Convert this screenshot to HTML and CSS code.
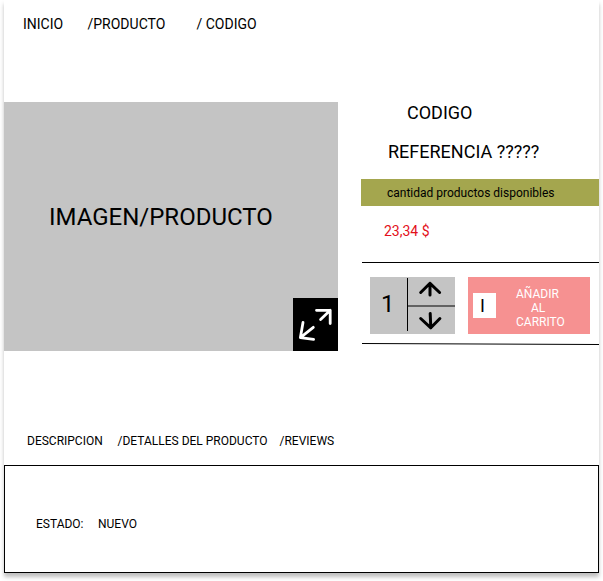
FILE: index.html
```html
<!DOCTYPE html>
<html lang="es">
<head>
<meta charset="utf-8">
<title>Producto</title>
<link rel="stylesheet" href="styles.css">
</head>
<body>
<main class="page">
  <nav class="crumbs"><span class="crumb-home">INICIO</span><span class="crumb-product">/PRODUCTO</span><span>/ CODIGO</span></nav>
  <section class="product">
    <div class="picture">
      <span class="picture-label">IMAGEN/PRODUCTO</span>
      <svg class="expand" viewBox="0 0 45 53" fill="none" stroke="#fff" stroke-width="2.8" stroke-linecap="round" stroke-linejoin="round">
        <path d="M23.5 12.3H37.2V25.5M37.2 12.3L27.6 21.5"/>
        <path d="M10 24.5L7.4 39.6L20.6 41.3M7.4 39.6L20.3 29.3"/>
      </svg>
    </div>
    <div class="info">
      <h1 class="code">CODIGO</h1>
      <h2 class="reference">REFERENCIA ?????</h2>
      <p class="stock">cantidad productos disponibles</p>
      <p class="price">23,34 $</p>
      <div class="buy">
        <div class="quantity">
          <span class="amount">1</span>
          <div class="stepper">
            <svg class="step" viewBox="0 0 47 27" fill="none" stroke="#000" stroke-width="3" stroke-linecap="round" stroke-linejoin="round"><path d="M12.7 14.5L22 5.3L31.6 14.5M22 5.3V17"/></svg>
            <svg class="step" viewBox="0 0 47 27" fill="none" stroke="#000" stroke-width="3" stroke-linecap="round" stroke-linejoin="round"><path d="M12.7 11.5L22.8 20.8L31.9 11.5M22.8 20.8L22.2 6.5"/></svg>
          </div>
        </div>
        <div class="add">
          <span class="add-icon">I</span>
          <span class="add-text"><span>AÑADIR</span><span class="add-middle">AL</span><span>CARRITO</span></span>
        </div>
      </div>
      <svg class="rule" viewBox="0 0 237 3"><path d="M0 1.5L237 2.5" stroke="#000"/></svg>
    </div>
  </section>
  <nav class="tabs"><span class="tab-description">DESCRIPCION</span><span class="tab-details">/DETALLES DEL PRODUCTO</span><span>/REVIEWS</span></nav>
  <section class="details"><span class="state">ESTADO:</span><span>NUEVO</span></section>
</main>
</body>
</html>
```
FILE: styles.css
```css
* { box-sizing: border-box; margin: 0; padding: 0; }

body {
  min-height: 581px;
  background: #fff;
  color: #000;
  font-family: Roboto, "Liberation Sans", sans-serif;
}

.page {
  display: flex;
  flex-direction: column;
  width: 595px;
  height: 573px;
  margin-left: 4px;
  background: #fff;
  box-shadow: 0 4px 4px rgba(0, 0, 0, 0.25);
}

.crumbs {
  display: flex;
  height: 102px;
  padding: 16px 0 0 19px;
  font-size: 14px;
  line-height: 16px;
  white-space: nowrap;
}
.crumb-home { width: 64.5px; }
.crumb-product { width: 109px; }

.product {
  display: flex;
  justify-content: space-between;
  height: 249px;
}

.picture {
  position: relative;
  width: 334px;
  padding: 101px 0 0 45px;
  background: #c4c4c4;
}
.picture-label { font-size: 24px; line-height: 28px; }
.expand {
  position: absolute;
  right: 0;
  bottom: 0;
  width: 45px;
  height: 53px;
  background: #000;
}

.info {
  display: flex;
  flex-direction: column;
  width: 238px;
}
.code, .reference {
  font-size: 18px;
  font-weight: 400;
  line-height: 21px;
}
.code { padding-left: 46px; }
.reference { margin-top: 18px; padding-left: 27px; }
.stock {
  height: 27px;
  margin-top: 17px;
  padding: 7px 0 0 26px;
  background: #a4a64e;
  font-size: 12px;
  line-height: 14px;
}
.price {
  margin: 17px 0 23px;
  padding-left: 23px;
  color: #e3101b;
  font-size: 14px;
  line-height: 16px;
}

.buy {
  display: flex;
  gap: 13px;
  height: 80px;
  margin-left: 1px;
  padding: 14px 0 0 8px;
  border-top: 1px solid #000;
}
.quantity {
  display: flex;
  width: 85px;
  height: 57px;
  background: #c4c4c4;
}
.amount {
  width: 37px;
  padding: 13px 0 0 11px;
  font-size: 24px;
  line-height: 28px;
}
.stepper {
  display: flex;
  flex-direction: column;
  width: 48px;
  height: 53px;
  margin-top: 1px;
  border-left: 1px solid #000;
}
.step { flex: none; width: 47px; height: 27px; }
.step:first-child { height: 29px; border-bottom: 2px solid #626262; }
.rule { flex: none; width: 237px; height: 3px; margin-left: 1px; }

.add {
  display: flex;
  width: 122px;
  height: 57px;
  padding-left: 5px;
  background: #f69191;
}
.add-icon {
  width: 23px;
  height: 25px;
  margin-top: 16px;
  padding: 2px 0 0 7px;
  background: #fff;
  font-size: 18px;
  line-height: 21px;
}
.add-text {
  display: flex;
  flex-direction: column;
  margin: 10px 0 0 20px;
  color: #fff;
  font-size: 12px;
  line-height: 14px;
}
.add-middle { padding-left: 15px; }

.tabs {
  display: flex;
  height: 114px;
  padding: 83px 0 0 23px;
  font-size: 12px;
  line-height: 14px;
  white-space: nowrap;
}
.tab-description { width: 90.5px; }
.tab-details { width: 162px; }

.details {
  display: flex;
  height: 108px;
  padding: 51px 0 0 31px;
  border: 1px solid #000;
  font-size: 12px;
  line-height: 14px;
}
.state { width: 62px; }
```
